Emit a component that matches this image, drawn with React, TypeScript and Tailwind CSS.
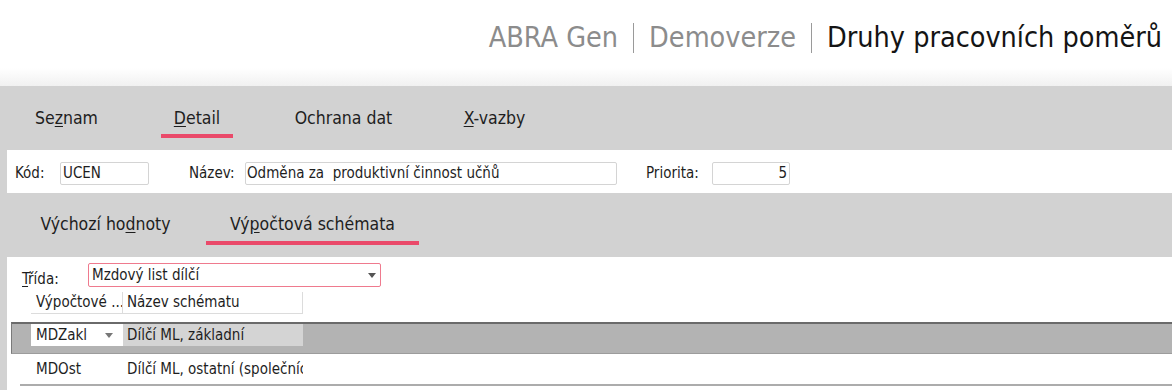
import React from 'react';

const font = "font-['DejaVu_Sans_Condensed','DejaVu_Sans',sans-serif]";

const mainTabs = [
  { key: 'seznam', label: <>Se<u className="underline-offset-2">z</u>nam</>, width: 'w-[87px]', ml: 'ml-[23px]' },
  { key: 'detail', label: <><u className="underline-offset-2">D</u>etail</>, width: 'w-[72px]', ml: 'ml-[51px]', active: true },
  { key: 'ochrana', label: <>Ochrana dat</>, width: 'w-[123px]', ml: 'ml-[49px]' },
  { key: 'xvazby', label: <><u className="underline-offset-2">X</u>-vazby</>, width: 'w-[87px]', ml: 'ml-[46px]' },
];

const Caret = ({ className = '' }: { className?: string }) => (
  <svg width="8" height="5" viewBox="0 0 8 5" className={className}>
    <path d="M0 0 L8 0 L4 5 Z" fill="currentColor" />
  </svg>
);

const App = () => {
  return (
    <div className={`w-[1172px] h-[390px] overflow-hidden bg-white text-[#1e1e1e] ${font}`}>
      {/* title */}
      <div className="h-[68px] flex items-center justify-end pr-[10px] pt-[8px] text-[28.5px] leading-none">
        <span className="text-[#8c8c8c]">ABRA Gen</span>
        <span className="mx-[15px] w-px h-[30px] bg-[#9a9a9a]" />
        <span className="text-[#8c8c8c]">Demoverze</span>
        <span className="mx-[15px] w-px h-[30px] bg-[#9a9a9a]" />
        <span className="text-[#141414]">Druhy pracovních poměrů</span>
      </div>
      <div className="h-[18px] bg-gradient-to-b from-white to-[#f1f1f1]" />

      {/* main tabs */}
      <div className="bg-[#d2d2d2]">
        <div className="h-[64px] flex pt-[19px] text-[17.5px]">
          {mainTabs.map((t) => (
            <div key={t.key} className={`${t.ml} ${t.width} flex flex-col items-center`}>
              <div className="h-[26px] leading-[26px] whitespace-nowrap">{t.label}</div>
              {t.active && <div className="mt-[3px] h-[4px] w-full bg-[#ea4a6a]" />}
            </div>
          ))}
        </div>

        {/* header form */}
        <div className="ml-[7px] h-[43px] bg-white flex items-center pt-[4px] text-[15px]">
          <span className="ml-[8px] w-[45px]">Kód:</span>
          <div className="w-[89px] h-[23px] border border-[#d4d4d4] rounded-[2px] px-[2px] leading-[21px]">UCEN</div>
          <span className="ml-[40px] w-[56px]">Název:</span>
          <div className="w-[372px] h-[23px] border border-[#d4d4d4] rounded-[2px] px-[1px] leading-[21px] whitespace-pre">Odměna za  produktivní činnost učňů</div>
          <span className="ml-[29px] w-[66px]">Priorita:</span>
          <div className="w-[78px] h-[23px] border border-[#d4d4d4] rounded-[2px] px-[2px] leading-[21px] text-right">5</div>
        </div>

        {/* sub tabs */}
        <div className="h-[64px] flex pt-[18px] text-[17.5px]">
          <div className="ml-[17px] w-[177px] flex flex-col items-center">
            <div className="h-[26px] leading-[26px] whitespace-nowrap">Výchozí ho<u className="underline-offset-2">d</u>noty</div>
          </div>
          <div className="ml-[12px] w-[213px] flex flex-col items-center">
            <div className="h-[26px] leading-[26px] whitespace-nowrap">Vý<u className="underline-offset-2">p</u>očtová schémata</div>
            <div className="mt-[4px] h-[4px] w-full bg-[#ea4a6a]" />
          </div>
        </div>

        {/* content */}
        <div className="ml-[7px] h-[133px] bg-white text-[15px]">
          <div className="flex items-center pt-[6px] h-[30px]">
            <span className="ml-[15px] mt-[8px] w-[66px]"><u className="underline-offset-2">T</u>řída:</span>
            <div className="w-[293px] h-[24px] border border-[#ef7a8e] rounded-[2px] flex items-center justify-between pl-[3px] pr-[4px]">
              <span>Mzdový list dílčí</span>
              <Caret className="text-[#555]" />
            </div>
          </div>

          <div className="flex ml-[24px] mt-[5px] h-[22px]">
            <div className="w-[92px] border-b border-r border-[#dcdcdc] pl-[5px] leading-[21px] whitespace-nowrap overflow-hidden">Výpočtové ...</div>
            <div className="w-[180px] border-b border-r border-[#dcdcdc] pl-[4px] leading-[21px] whitespace-nowrap">Název schématu</div>
          </div>

          {/* selected row */}
          <div className="ml-[4px] mt-[8px] h-[32px] bg-[#b3b3b3] border-t-2 border-l border-b border-t-[#6a6a6a] border-l-[#7a7a7a] border-b-[#9c9c9c]">
            <div className="flex ml-[19px] h-[22px]">
              <div className="w-[92px] bg-white flex items-center justify-between pl-[5px] pr-[10px]">
                <span>MDZakl</span>
                <Caret className="text-[#777]" />
              </div>
              <div className="w-[180px] bg-[#d4d4d4] pl-[4px] leading-[22px] whitespace-nowrap overflow-hidden">Dílčí ML, základní</div>
            </div>
          </div>

          <div className="ml-[13px] h-[32px] border-b-2 border-[#acacac] flex items-center">
            <div className="ml-[16px] w-[91px]">MDOst</div>
            <div className="w-[176px] whitespace-nowrap overflow-hidden">Dílčí ML, ostatní (společníci)</div>
          </div>
        </div>
      </div>
    </div>
  );
};

export default App;
